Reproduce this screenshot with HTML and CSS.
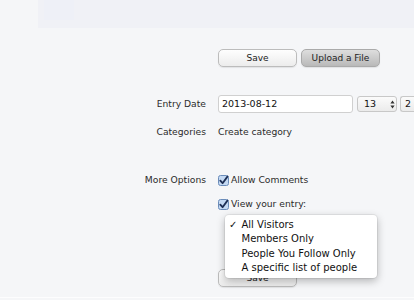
FILE: index.html
```html
<!DOCTYPE html>
<html>
<head>
<meta charset="utf-8">
<link rel="stylesheet" href="styles.css">
</head>
<body>
<div class="band"><div class="smudge"></div></div>
<div class="form">
  <div class="row r-buttons">
    <div class="label"></div>
    <div class="field">
      <button class="btn">Save</button>
      <button class="btn dark">Upload a File</button>
    </div>
  </div>
  <div class="row r-entry">
    <div class="label">Entry Date</div>
    <div class="field">
      <span class="input">2013-08-12</span>
      <span class="sel">13<svg class="arrows" width="5" height="9" viewBox="0 0 5 9"><path d="M2.5 0.5L4.6 3.4H0.4Z M2.5 8.5L4.6 5.6H0.4Z" fill="#333"/></svg></span>
      <span class="sel last">2</span>
    </div>
  </div>
  <div class="row r-cat">
    <div class="label">Categories</div>
    <div class="field">Create category</div>
  </div>
  <div class="row r-more">
    <div class="label">More Options</div>
    <div class="field"><span class="cb"><svg width="11" height="11" viewBox="0 0 11 11"><rect x="0.5" y="0.5" width="10" height="10" rx="2" fill="#c4d9f3" stroke="#6a8cba"/><path d="M2.3 5.6L4.6 8.2L9.4 1.6" fill="none" stroke="#1d2f55" stroke-width="1.8" stroke-linecap="round" stroke-linejoin="round"/></svg></span>Allow Comments</div>
  </div>
  <div class="row r-view">
    <div class="label"></div>
    <div class="field view"><span class="cb"><svg width="11" height="11" viewBox="0 0 11 11"><rect x="0.5" y="0.5" width="10" height="10" rx="2" fill="#c4d9f3" stroke="#6a8cba"/><path d="M2.3 5.6L4.6 8.2L9.4 1.6" fill="none" stroke="#1d2f55" stroke-width="1.8" stroke-linecap="round" stroke-linejoin="round"/></svg></span>View your entry:
      <ul class="menu">
        <li><span class="check">✓</span>All Visitors</li>
        <li><span class="check"></span>Members Only</li>
        <li><span class="check"></span>People You Follow Only</li>
        <li><span class="check"></span>A specific list of people</li>
      </ul>
    </div>
  </div>
  <div class="row r-save">
    <div class="label"></div>
    <div class="field"><button class="btn">Save</button></div>
  </div>
</div>
<div class="footer"></div>
</body>
</html>
```

FILE: styles.css
```css
html, body {
  margin: 0;
  padding: 0;
  overflow: hidden;
}
body {
  width: 414px;
  height: 300px;
  background: #f5f6f8;
  font-family: "DejaVu Sans", sans-serif;
  font-size: 9.2px;
  color: #2b2b2b;
}
.band {
  margin-left: 38px;
  height: 28px;
  background: #f0f1f6;
  position: relative;
}
.smudge {
  position: absolute;
  left: 6px;
  top: 0;
  width: 30px;
  height: 20px;
  background: #eef0f7;
}
.form {
  display: flex;
  flex-direction: column;
}
.row {
  display: grid;
  grid-template-columns: 206px 1fr;
  column-gap: 12px;
  align-items: center;
  line-height: 14px;
}
.label {
  text-align: right;
  white-space: nowrap;
}
.field {
  display: flex;
  align-items: center;
  white-space: nowrap;
}
.r-buttons { margin-top: 21px; }
.r-entry { margin-top: 28px; }
.r-cat { margin-top: 12px; }
.r-more { margin-top: 34px; }
.r-view { margin-top: 10px; }
.r-save { margin-top: 58px; }

.btn {
  box-sizing: border-box;
  width: 79px;
  height: 18px;
  margin: 0 4px 0 0;
  padding: 0;
  border: 1px solid #bcbcbc;
  border-radius: 5px;
  background: linear-gradient(#fefefe, #ececec);
  box-shadow: 0 1px 1px rgba(0,0,0,0.08);
  font-family: "DejaVu Sans", sans-serif;
  font-size: 9px;
  color: #222;
}
.btn.dark {
  border-color: #aaa;
  background: linear-gradient(#dedede, #b9b9b9);
}
.input {
  box-sizing: border-box;
  width: 135px;
  height: 18px;
  border: 1px solid #d0d0d0;
  border-radius: 3px;
  background: #fff;
  padding: 0 0 0 3px;
  line-height: 16px;
  font-size: 9.5px;
  color: #111;
}
.sel {
  box-sizing: border-box;
  display: inline-flex;
  align-items: center;
  width: 40px;
  height: 16px;
  margin-left: 4px;
  border: 1px solid #c8c8c8;
  border-radius: 3px;
  background: linear-gradient(#fbfbfb, #ebebeb);
  padding-left: 6px;
  color: #111;
  font-size: 9.5px;
  flex: none;
}
.sel.last {
  width: 14px;
  margin-left: 3px;
  padding-left: 4px;
  border-right: 0;
  border-radius: 3px 0 0 3px;
}
.arrows {
  margin-left: 14px;
}
.cb {
  display: inline-flex;
  width: 11px;
  height: 11px;
  margin: 0 2px 0 0;
}
.view {
  position: relative;
}
.menu {
  position: absolute;
  left: 7px;
  top: 18px;
  width: 152px;
  margin: 0;
  padding: 3px 0;
  list-style: none;
  background: #fff;
  border-radius: 4px;
  box-shadow: 0 3px 9px rgba(0,0,0,0.28), 0 0 0 1px rgba(0,0,0,0.06);
  font-size: 10px;
  line-height: 14.3px;
  color: #111;
  z-index: 2;
}
.menu li {
  display: flex;
}
.check {
  width: 16.5px;
  padding-left: 4px;
  box-sizing: border-box;
  font-size: 10px;
}
.footer {
  margin-top: 10px;
  border-top: 1px solid #fdfdfe;
}
```
